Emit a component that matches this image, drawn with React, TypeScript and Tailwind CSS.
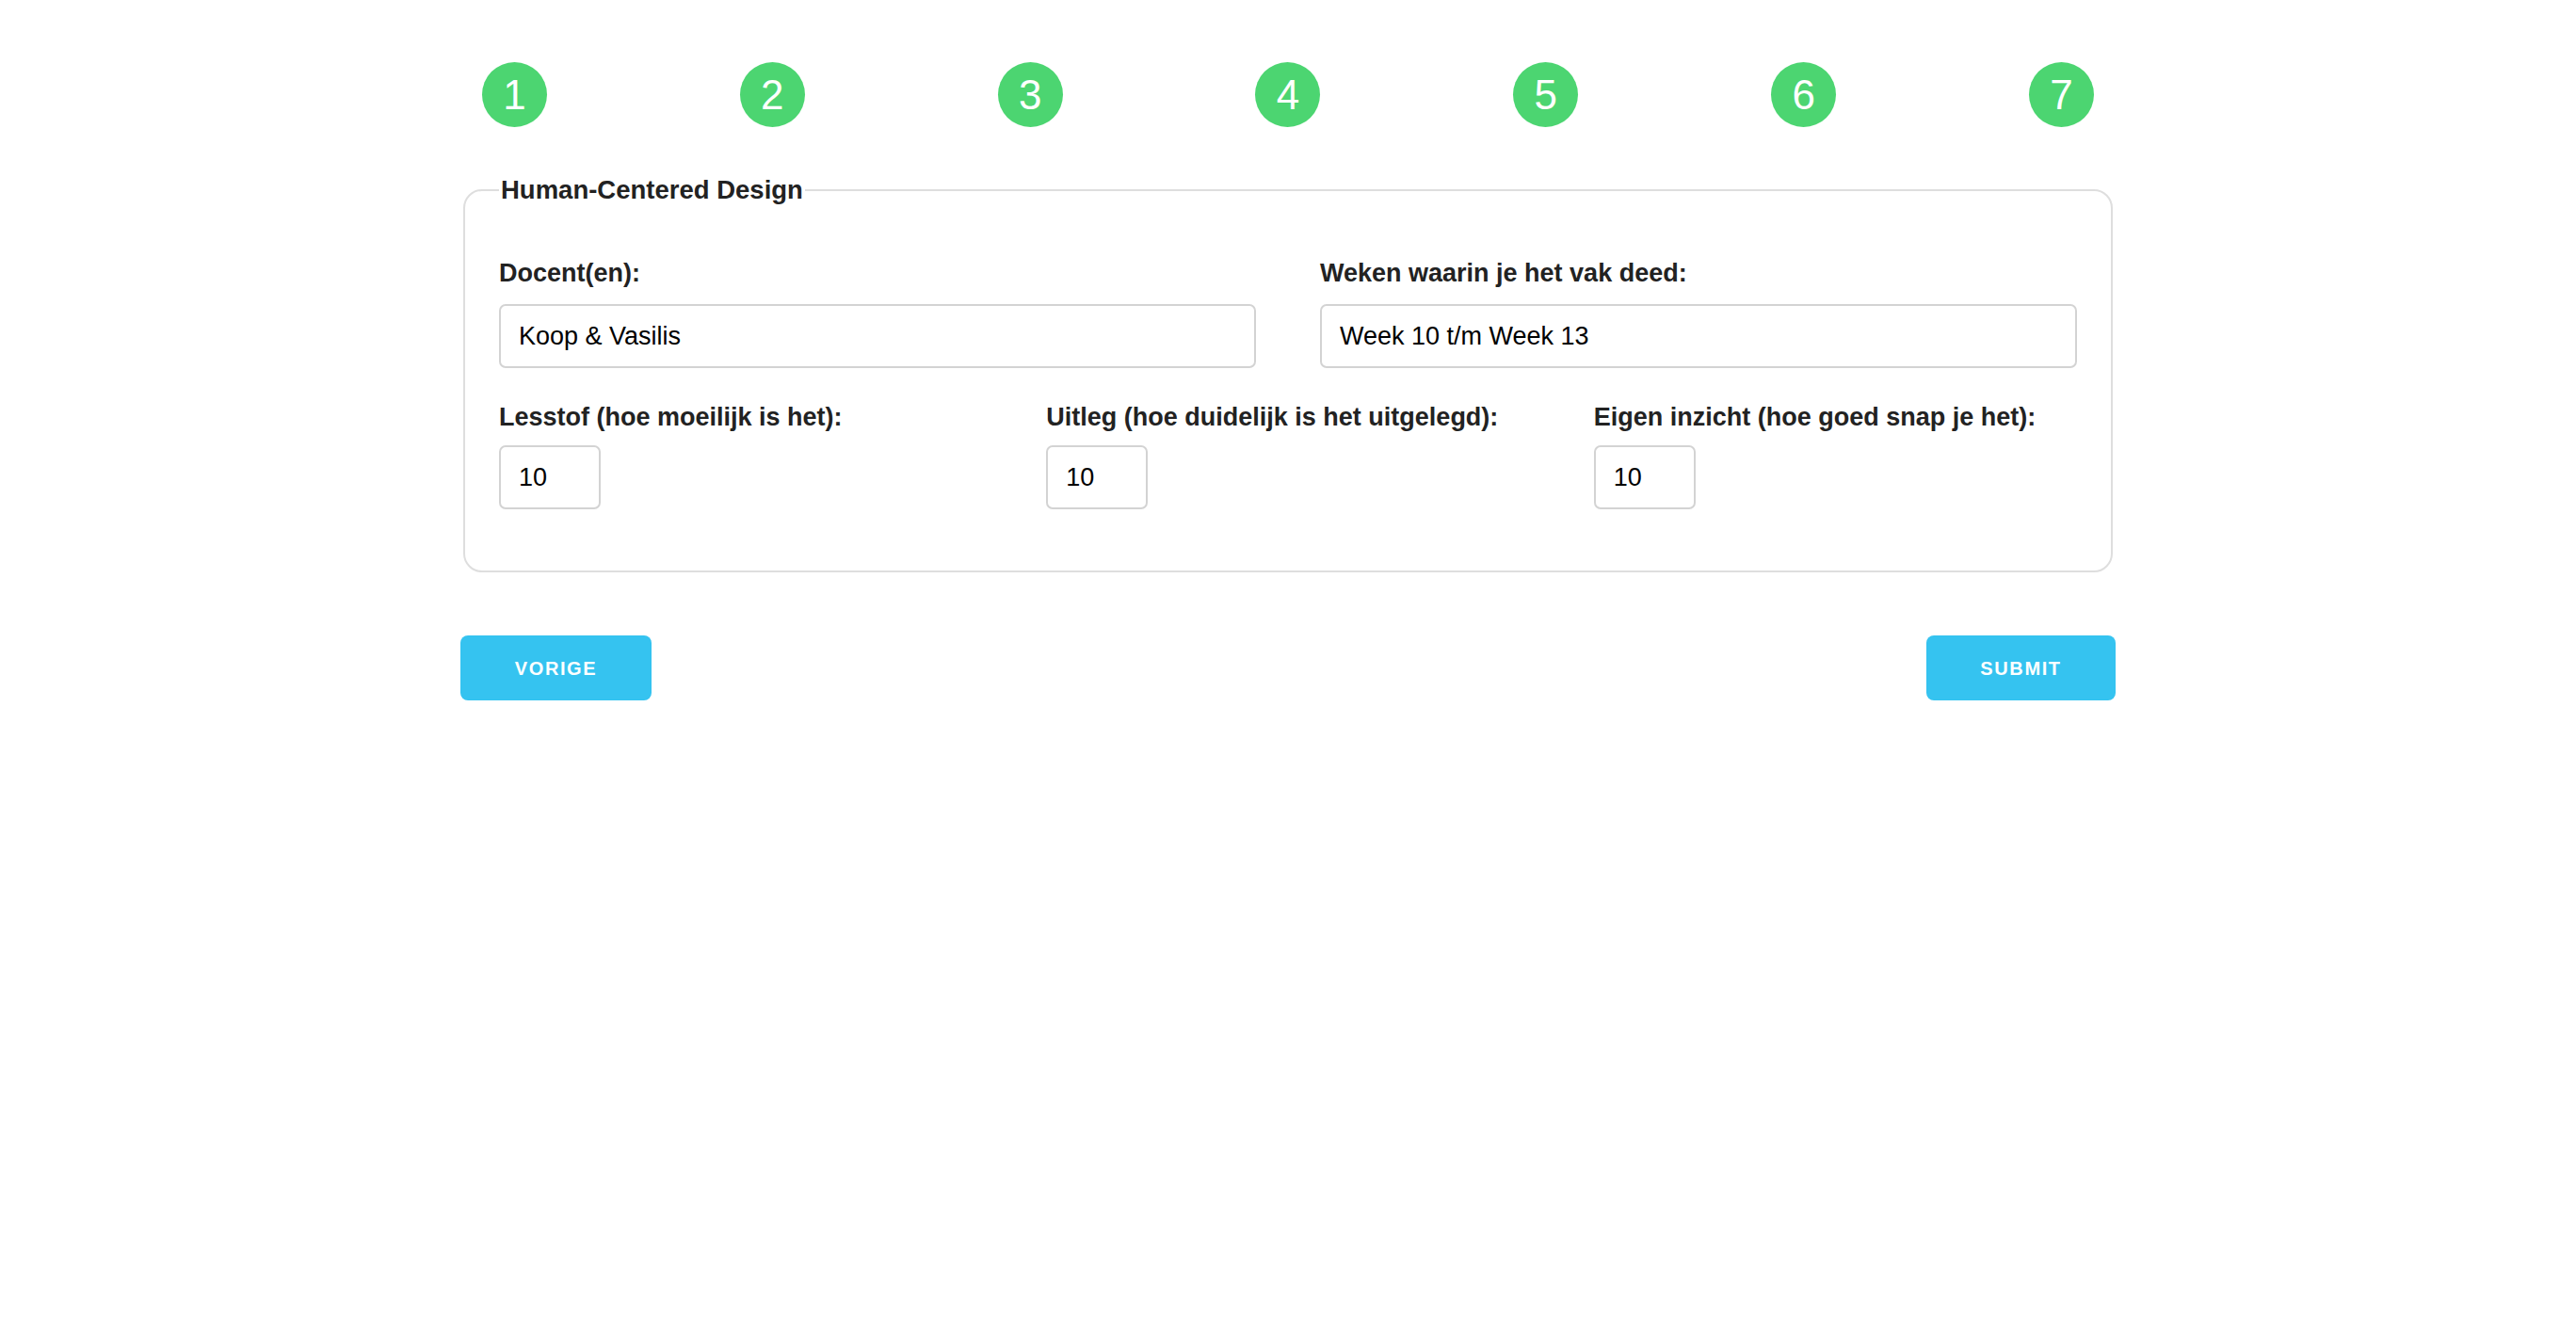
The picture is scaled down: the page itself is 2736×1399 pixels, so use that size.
const steps = [1, 2, 3, 4, 5, 6, 7];

const labelCls =
  "block text-[27px] leading-[32px] font-bold text-[#222222]";
const inputCls =
  "h-[68px] rounded-[7px] border-2 border-[#d3d3d3] bg-white px-[19px] text-[27px] text-black outline-none";

const Field = ({ label, value, wide, gap }: { label: string; value: string; wide?: boolean; gap: string }) => (
  <div className="flex flex-col">
    <label className={`${labelCls} ${gap}`}>{label}</label>
    <input
      readOnly
      value={value}
      className={`${inputCls} ${wide ? "w-full" : "w-[108px]"}`}
    />
  </div>
);

export default function App() {
  return (
    <div
      className="min-h-screen bg-white pt-[66px]"
      style={{ fontFamily: '"Liberation Sans", Arial, sans-serif' }}
    >
      <div className="mx-auto w-[1758px]">
        {/* step indicators */}
        <div className="mx-auto flex w-[1712px] justify-between">
          {steps.map((n) => (
            <div
              key={n}
              className="flex h-[69px] w-[69px] items-center justify-center rounded-full bg-[#4cd571] text-[44px] leading-none text-white"
            >
              {n}
            </div>
          ))}
        </div>

        <fieldset className="mx-[3px] mt-[51px] rounded-[20px] border-2 border-[#dedede] px-[36px] pt-[56px] pb-[65px]">
          <legend className="px-[2px] text-[27.5px] leading-[32px] font-bold text-[#222222]">
            Human-Centered Design
          </legend>

          <div className="grid grid-cols-2 gap-x-[68px]">
            <Field label="Docent(en):" value="Koop & Vasilis" wide gap="mb-[17px]" />
            <Field label="Weken waarin je het vak deed:" value="Week 10 t/m Week 13" wide gap="mb-[17px]" />
          </div>

          <div className="mt-[36px] grid grid-cols-3 gap-x-[68px]">
            <Field label="Lesstof (hoe moeilijk is het):" value="10" gap="mb-[14px]" />
            <Field label="Uitleg (hoe duidelijk is het uitgelegd):" value="10" gap="mb-[14px]" />
            <Field label="Eigen inzicht (hoe goed snap je het):" value="10" gap="mb-[14px]" />
          </div>
        </fieldset>

        <div className="mt-[67px] flex justify-between">
          <button className="h-[69px] w-[203px] rounded-[8px] bg-[#35c3f0] text-[20px] font-bold tracking-[1.6px] text-white">
            VORIGE
          </button>
          <button className="h-[69px] w-[201px] rounded-[8px] bg-[#35c3f0] text-[20px] font-bold tracking-[1.6px] text-white">
            SUBMIT
          </button>
        </div>
      </div>
    </div>
  );
}
